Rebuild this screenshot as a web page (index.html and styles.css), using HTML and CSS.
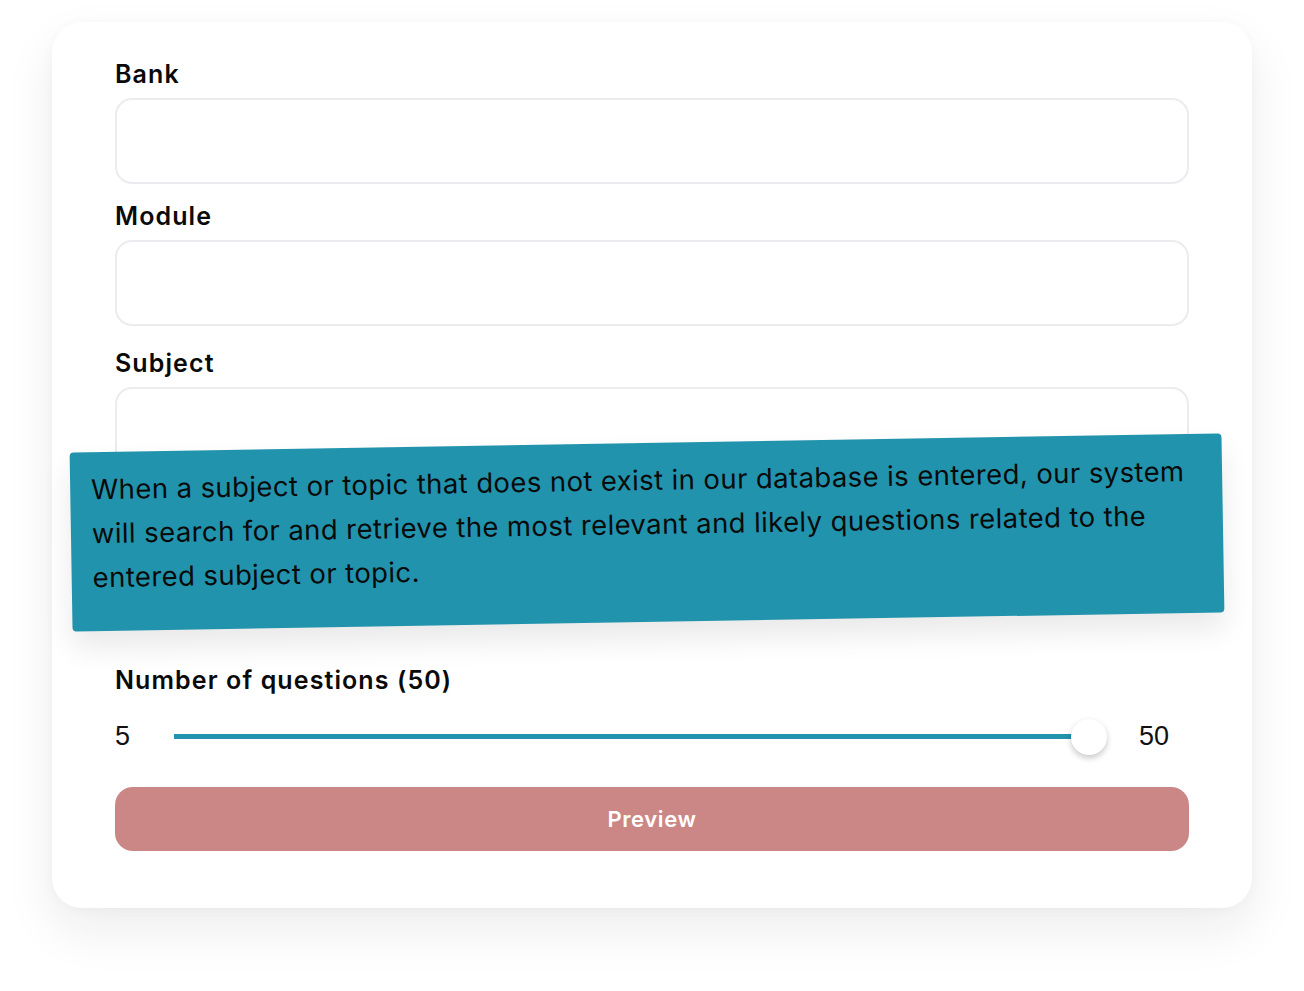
FILE: index.html
```html
<!DOCTYPE html>
<html lang="en">
<head>
<meta charset="utf-8">
<title>Quiz form</title>
<link rel="stylesheet" href="styles.css">
</head>
<body>
<div class="page">
  <form class="card">
    <div class="field">
      <label class="label">Bank</label>
      <div class="input"></div>
    </div>
    <div class="field">
      <label class="label">Module</label>
      <div class="input"></div>
    </div>
    <div class="field field-subject">
      <label class="label">Subject</label>
      <div class="input"></div>
    </div>
    <div class="field field-count">
      <label class="label">Number of questions (50)</label>
      <div class="slider-row">
        <span class="num">5</span>
        <div class="track">
          <div class="fill"></div>
          <div class="thumb"></div>
        </div>
        <span class="num num-max">50</span>
      </div>
    </div>
    <button type="button" class="btn">Preview</button>
  </form>
  <div class="tooltip">When a subject or topic that does not exist in our database is entered, our system<br>will search for and retrieve the most relevant and likely questions related to the<br>entered subject or topic.</div>
</div>
</body>
</html>
```

FILE: styles.css
```css
html, body {
  margin: 0;
  padding: 0;
  background: #ffffff;
}
body {
  font-family: "Inter", "Liberation Sans", sans-serif;
  color: #0b0b0b;
}
.page {
  position: relative;
  width: 1304px;
  height: 991px;
  overflow: hidden;
  padding: 22px 52px 0;
  box-sizing: border-box;
}
.card {
  background: #ffffff;
  border-radius: 30px;
  box-shadow: 0 22px 50px rgba(20, 20, 40, 0.08), 0 2px 12px rgba(20, 20, 40, 0.03);
  padding: 34px 63px 57px;
  display: flex;
  flex-direction: column;
}
.field {
  display: flex;
  flex-direction: column;
  gap: 6px;
  margin-bottom: 14px;
}
.field-subject {
  margin-top: 5px;
  margin-bottom: 189px;
}
.label {
  font-family: "Inter", "Liberation Sans", sans-serif;
  font-weight: 600;
  font-size: 25px;
  line-height: 36px;
  letter-spacing: 1.1px;
  color: #0a0a0a;
}
.input {
  height: 86px;
  box-sizing: border-box;
  border: 2px solid #ececf0;
  border-radius: 17px;
  background: #ffffff;
}
.field-count {
  gap: 0;
  margin-bottom: 24px;
}
.slider-row {
  display: flex;
  align-items: center;
  height: 54px;
  margin-top: 11px;
}
.num {
  font-family: "Liberation Sans", "Roboto", sans-serif;
  font-size: 27px;
  color: #111111;
  width: 59px;
}
.num-max {
  width: 50px;
  margin-left: 50px;
}
.track {
  position: relative;
  flex: 1;
  height: 5px;
  background: #2193ad;
}
.thumb {
  position: absolute;
  right: -18px;
  top: 50%;
  width: 36px;
  height: 36px;
  margin-top: -17px;
  border-radius: 50%;
  background: #ffffff;
  box-shadow: 0 3px 6px rgba(0, 0, 0, 0.22);
}
.fill {
  height: 100%;
  background: #2193ad;
}
.btn {
  height: 64px;
  border: none;
  border-radius: 18px;
  background: #cb8785;
  color: #ffffff;
  font-family: "Inter", "Liberation Sans", sans-serif;
  font-weight: 600;
  font-size: 22px;
  letter-spacing: 0.6px;
  cursor: pointer;
}
.tooltip {
  position: absolute;
  left: 71px;
  top: 443px;
  width: 1152px;
  height: 179px;
  box-sizing: border-box;
  padding: 15px 20px 0 21px;
  background: #2193ad;
  border-radius: 4px;
  transform: rotate(-0.95deg);
  box-shadow: 0 16px 30px rgba(0, 0, 0, 0.09);
  font-family: "Inter", "Liberation Sans", sans-serif;
  font-size: 27.5px;
  letter-spacing: 0.4px;
  line-height: 44px;
  color: #0a0a0a;
  white-space: nowrap;
}
```
